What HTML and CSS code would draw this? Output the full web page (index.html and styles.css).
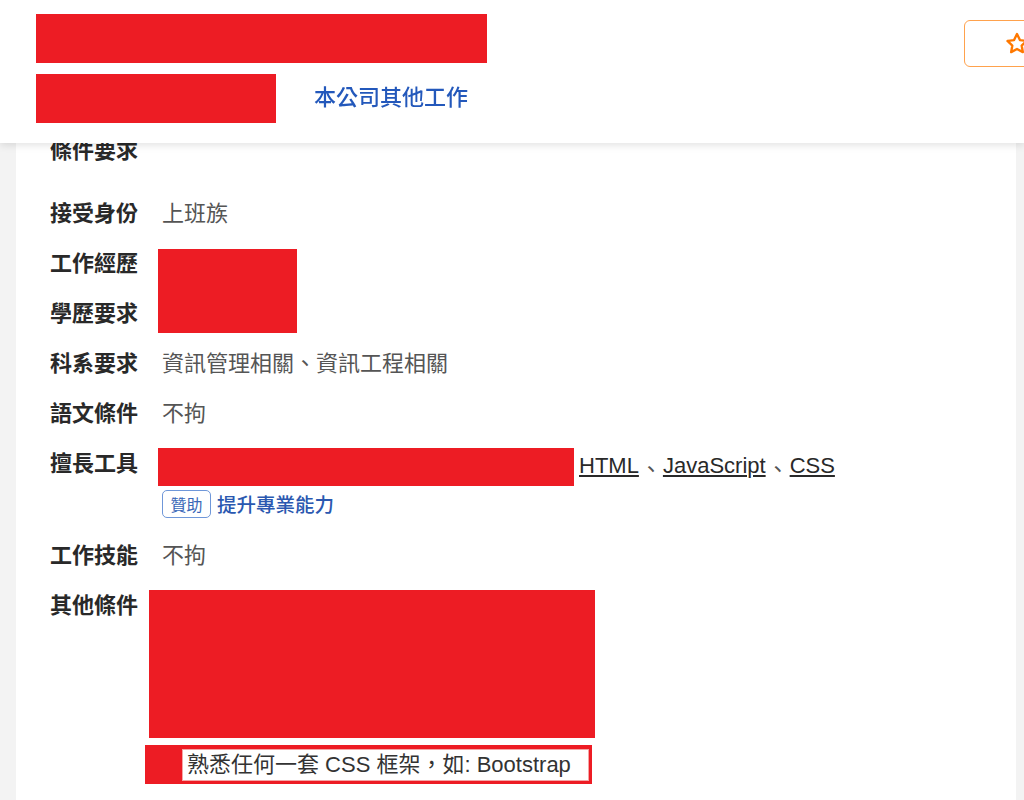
FILE: index.html
```html
<!DOCTYPE html>
<html lang="zh-Hant">
<head>
<meta charset="utf-8">
<title>條件要求</title>
<link rel="stylesheet" href="styles.css">
</head>
<body>
<header class="topbar">
  <div class="topbar-left">
    <div class="redact redact-title"></div>
    <div class="company-line">
      <div class="redact redact-company"></div>
      <a class="company-link" href="#">本公司其他工作</a>
    </div>
  </div>
  <button class="save-btn" type="button" aria-label="儲存">
    <svg class="star" viewBox="0 0 24 24" width="26" height="26"><path d="M12 2.8l2.7 5.6 6.1.8-4.5 4.2 1.1 6.1L12 16.6l-5.4 2.9 1.1-6.1-4.5-4.2 6.1-.8z" fill="none" stroke="#ff7800" stroke-width="2.2" stroke-linejoin="round"/></svg>
  </button>
</header>

<main class="card">
  <h2 class="section-title">條件要求</h2>
  <div class="rows">
    <div class="row">
      <div class="label">接受身份</div>
      <div class="value">上班族</div>
    </div>
    <div class="row">
      <div class="label">工作經歷</div>
      <div class="value value-rel"><div class="redact redact-exp"></div></div>
    </div>
    <div class="row">
      <div class="label">學歷要求</div>
      <div class="value"></div>
    </div>
    <div class="row">
      <div class="label">科系要求</div>
      <div class="value">資訊管理相關、資訊工程相關</div>
    </div>
    <div class="row">
      <div class="label">語文條件</div>
      <div class="value">不拘</div>
    </div>
    <div class="row row-tools">
      <div class="label">擅長工具</div>
      <div class="value">
        <div class="tools-line">
          <div class="redact redact-tools"></div>
          <a class="tool" href="#">HTML</a><span class="sep">、</span><a class="tool" href="#">JavaScript</a><span class="sep">、</span><a class="tool" href="#">CSS</a>
        </div>
        <div class="sponsor-line">
          <span class="badge">贊助</span>
          <a class="sponsor-link" href="#">提升專業能力</a>
        </div>
      </div>
    </div>
    <div class="row">
      <div class="label">工作技能</div>
      <div class="value">不拘</div>
    </div>
    <div class="row">
      <div class="label">其他條件</div>
      <div class="value">
        <div class="redact redact-other"></div>
        <div class="note-wrap"><span class="note">熟悉任何一套 CSS 框架，如: Bootstrap</span></div>
      </div>
    </div>
  </div>
</main>
</body>
</html>
```

FILE: styles.css
```css
* { box-sizing: border-box; }

html, body {
  margin: 0;
  padding: 0;
}

body {
  background: #f3f3f3;
  font-family: "Noto Sans CJK TC", "Noto Sans", sans-serif;
  color: #292929;
  overflow: hidden;
  height: 800px;
}

.redact { background: #ed1c24; }

.topbar {
  position: fixed;
  top: 0;
  left: 0;
  right: 0;
  height: 143px;
  background: #fff;
  box-shadow: 0 2px 8px rgba(0, 0, 0, 0.12);
  display: flex;
  justify-content: space-between;
  align-items: flex-start;
  padding: 14px 0 0 36px;
  overflow: hidden;
  z-index: 10;
}

.topbar-left {
  display: flex;
  flex-direction: column;
  gap: 11px;
}

.redact-title { width: 451px; height: 49px; }

.company-line {
  display: flex;
  align-items: flex-start;
  gap: 38px;
}

.redact-company { width: 240px; height: 49px; }

.company-link {
  color: #2358bb;
  font-size: 22px;
  font-weight: 500;
  text-decoration: none;
  line-height: 30px;
  margin-top: 6px;
}

.save-btn {
  margin-top: 6px;
  width: 110px;
  height: 47px;
  flex: none;
  margin-right: -50px;
  background: #fff;
  border: 1px solid #ffa24d;
  border-radius: 6px;
  padding: 0 0 0 39px;
  display: flex;
  align-items: center;
  justify-content: flex-start;
}

.star { display: block; }

.card {
  margin: 0 8px 0 16px;
  background: #fff;
  min-height: 800px;
  padding: 133px 20px 20px 34px;
}

.section-title {
  margin: 0;
  font-size: 22px;
  line-height: 30px;
  font-weight: 700;
  color: #292929;
}

.rows {
  margin-top: 33px;
  display: flex;
  flex-direction: column;
  gap: 20px;
}

.row {
  display: flex;
  align-items: flex-start;
  font-size: 22px;
  line-height: 30px;
}

.label {
  width: 112px;
  flex: none;
  font-weight: 700;
  color: #292929;
}

.value {
  color: #555;
  min-height: 30px;
}

.value-rel { position: relative; }

.redact-exp {
  position: absolute;
  left: -4px;
  top: 3px;
  width: 139px;
  height: 84px;
}

.row-tools .value { margin-top: 2px; }

.tools-line {
  display: flex;
  align-items: center;
  height: 38px;
  margin-left: -4px;
}

.redact-tools {
  width: 416px;
  height: 38px;
  margin-right: 5px;
}

.tool {
  font-family: "Liberation Sans", Arial, sans-serif;
  color: #292929;
  text-decoration: underline;
  text-underline-offset: 2px;
  margin-top: -3px;
}

.sep { color: #555; padding: 0 1px; }

.sponsor-line {
  display: flex;
  align-items: center;
  gap: 6px;
  margin-top: 4px;
  height: 28px;
}

.badge {
  display: inline-flex;
  align-items: center;
  justify-content: center;
  width: 49px;
  height: 28px;
  border: 1px solid #6f97d9;
  border-radius: 5px;
  color: #3a67b8;
  font-size: 16px;
  line-height: 1;
}

.sponsor-link {
  color: #2a58b0;
  font-size: 19.5px;
  font-weight: 500;
  text-decoration: none;
}

.redact-other {
  width: 446px;
  height: 148px;
  margin-left: -13px;
  margin-top: 2px;
}

.note-wrap {
  margin-top: 7px;
  margin-left: -17px;
  width: 447px;
  height: 39px;
  background: #ed1c24;
  padding: 4px 3px 3px 37px;
}

.note {
  display: block;
  height: 32px;
  background: #fff;
  border: 1px solid #f4a6a6;
  color: #333;
  font-family: "Liberation Sans", "Noto Sans CJK TC", sans-serif;
  font-size: 22px;
  line-height: 30px;
  padding-left: 4px;
  white-space: nowrap;
}
```
